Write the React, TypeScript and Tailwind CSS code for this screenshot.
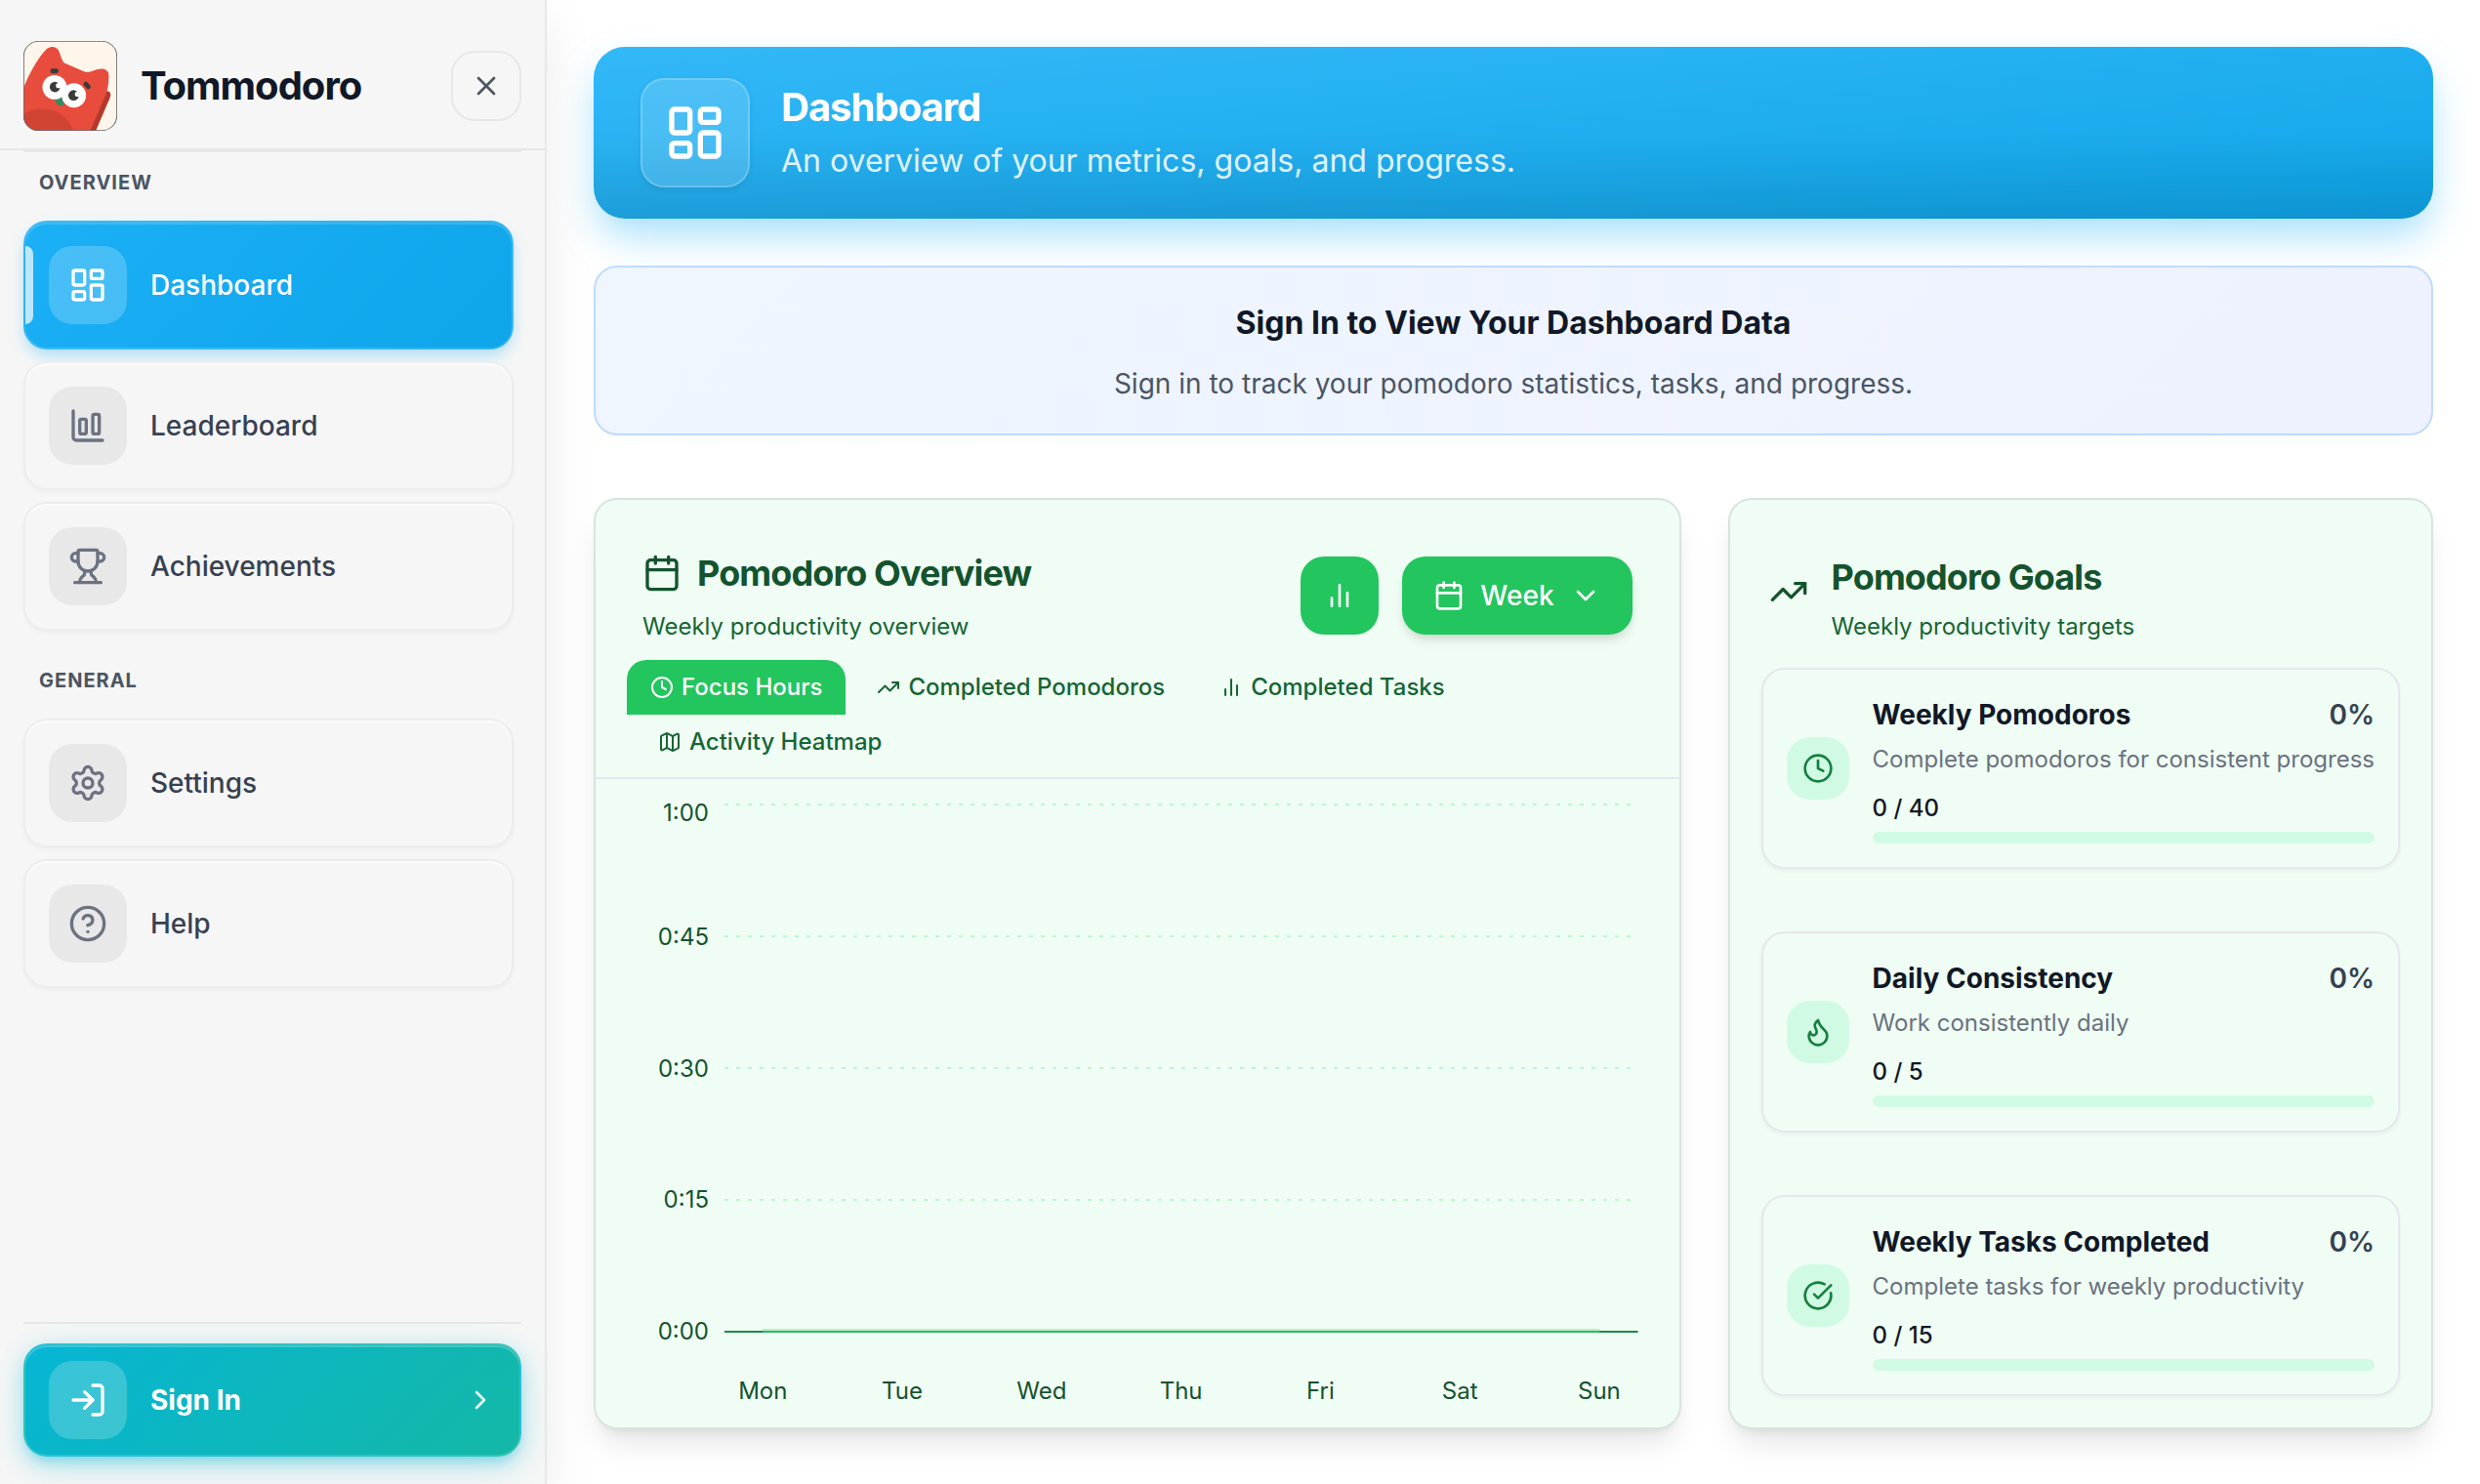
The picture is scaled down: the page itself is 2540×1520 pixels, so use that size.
import React from "react";
import {
  Calendar,
  ChevronDown,
  ChevronRight,
  CircleCheckBig,
  CircleHelp,
  Clock,
  Flame,
  LayoutDashboard,
  LogIn,
  Map as MapIcon,
  Settings,
  TrendingUp,
  Trophy,
  X,
} from "lucide-react";

type IconProps = { className?: string };
type IconType = React.ComponentType<IconProps>;

function ColumnsIcon({ className }: IconProps) {
  return (
    <svg
      className={className}
      viewBox="0 0 24 24"
      fill="none"
      stroke="currentColor"
      strokeWidth="2"
      strokeLinecap="round"
      strokeLinejoin="round"
      aria-hidden="true"
    >
      <path d="M18 20V10M12 20V4M6 20v-6" />
    </svg>
  );
}

function BoardIcon({ className }: IconProps) {
  return (
    <svg
      className={className}
      viewBox="0 0 24 24"
      fill="none"
      stroke="currentColor"
      strokeWidth="2"
      strokeLinecap="round"
      strokeLinejoin="round"
      aria-hidden="true"
    >
      <path d="M3 3v16a2 2 0 0 0 2 2h16" />
      <rect x="15" y="5" width="4" height="12" rx="1" />
      <rect x="7" y="8" width="4" height="9" rx="1" />
    </svg>
  );
}

function Logo() {
  return (
    <svg className="h-[92px] w-24 shrink-0" viewBox="43 37 286 274" preserveAspectRatio="none" role="img" aria-label="Tommodoro logo">
      <defs>
        <clipPath id="logo-frame">
          <rect x="43" y="37" width="286" height="274" rx="46" />
        </clipPath>
      </defs>
      <g clipPath="url(#logo-frame)">
        <rect x="43" y="37" width="286" height="274" fill="#fef5eb" />
        <path d="M290 196C296 184 310 190 309 202C308 210 300 226 296 236L263 313H240Z" fill="#b23a2c" />
        <path
          d="M40 188C58 142 84 92 112 63C126 50 146 54 152 70C157 82 160 97 168 104L228 130C238 134 250 130 258 127C276 119 302 118 303 140C304 162 301 184 294 201L246 313H40Z"
          fill="#e84c3d"
        />
        <circle cx="100" cy="345" r="102" fill="#d14434" />
        <path d="M139 212C140 228 150 237 166 233L160 205Z" fill="#2f8b62" />
        <circle cx="138" cy="178" r="37" fill="#fff" />
        <circle cx="197" cy="203" r="37" fill="#fff" />
        <circle cx="139" cy="177" r="16" fill="#3b3b3b" />
        <circle cx="150" cy="173" r="8" fill="#fff" />
        <circle cx="196" cy="203" r="16" fill="#3b3b3b" />
        <circle cx="208" cy="199" r="8" fill="#fff" />
        <rect x="125" y="121" width="25" height="14" rx="6" fill="#3b3b3b" />
        <rect x="225" y="165" width="25" height="14" rx="6" fill="#3b3b3b" transform="rotate(46 237 172)" />
      </g>
      <rect x="44" y="38" width="284" height="272" rx="45" fill="none" stroke="#6b6b6b" strokeWidth="3" />
    </svg>
  );
}

function NavItem({ icon: Icon, label, active = false }: { icon: IconType; label: string; active?: boolean }) {
  return (
    <li>
      <a
        href="#"
        aria-current={active ? "page" : undefined}
        className={
          active
            ? "relative flex items-center gap-6 overflow-hidden rounded-3xl border-2 border-white/15 bg-[linear-gradient(135deg,#1cb0f6,#0ea5e9)] p-6 text-white shadow-[0_8px_16px_-2px_rgba(28,176,246,0.35),inset_0_2px_0_rgba(255,255,255,0.15)]"
            : "relative flex items-center gap-6 rounded-3xl border-2 border-[#ededed] bg-[#f6f6f6] p-6 text-[#374151] shadow-[0_2px_4px_rgba(0,0,0,0.04),inset_0_2px_0_rgba(255,255,255,0.7)]"
        }
      >
        {active && <span className="absolute left-0 top-6 h-20 w-2 rounded-r-lg bg-white/70" />}
        <span
          className={
            active
              ? "flex size-20 items-center justify-center rounded-3xl bg-white/20"
              : "flex size-20 items-center justify-center rounded-3xl bg-[#e8e8e8] text-[#6b7280]"
          }
        >
          <Icon className="size-10" />
        </span>
        <span className="text-[28px] leading-10 font-medium">{label}</span>
      </a>
    </li>
  );
}

function NavSection({ title, children }: { title: string; children: React.ReactNode }) {
  return (
    <section>
      <h2 className="px-4 text-xl leading-[30px] font-bold tracking-wider text-[#4b5563]">{title}</h2>
      <ul className="mt-6 flex flex-col gap-3">{children}</ul>
    </section>
  );
}

function Sidebar() {
  return (
    <aside className="relative z-10 flex min-h-screen w-[560px] shrink-0 flex-col border-r-2 border-[#e7e7e7] bg-[#f6f6f6] shadow-[0_20px_50px_rgba(0,0,0,0.08)]">
      <div className="flex items-center border-b-2 border-[#e7e7e7] px-6 pt-10 pb-4">
        <div className="flex h-24 flex-1 items-center gap-6">
          <Logo />
          <span className="text-[40px] leading-[48px] font-bold tracking-tight text-[#111827]">Tommodoro</span>
        </div>
        <button
          type="button"
          aria-label="Close sidebar"
          className="flex size-[72px] items-center justify-center rounded-3xl border-2 border-[#e7e7e7] text-[#4b5563]"
        >
          <X className="size-8" />
        </button>
      </div>
      <nav className="mx-6 flex flex-1 flex-col gap-9 border-t-2 border-[#e7e7e7] pt-4 pr-2">
        <NavSection title="OVERVIEW">
          <NavItem icon={LayoutDashboard} label="Dashboard" active />
          <NavItem icon={BoardIcon} label="Leaderboard" />
          <NavItem icon={Trophy} label="Achievements" />
        </NavSection>
        <NavSection title="GENERAL">
          <NavItem icon={Settings} label="Settings" />
          <NavItem icon={CircleHelp} label="Help" />
        </NavSection>
      </nav>
      <div className="mx-6 border-t-2 border-[#e7e7e7] pt-5 pb-7">
        <button
          type="button"
          className="flex w-full items-center gap-6 rounded-3xl border-2 border-white/15 bg-[linear-gradient(135deg,#06b6d4,#14b8a6)] px-6 py-4 text-left text-white shadow-[0_8px_30px_rgba(6,182,212,0.35),0_8px_12px_-4px_rgba(6,182,212,0.3),inset_0_2px_0_rgba(255,255,255,0.2)]"
        >
          <span className="flex size-20 items-center justify-center rounded-3xl bg-white/20">
            <LogIn className="size-10" />
          </span>
          <span className="flex-1 text-[28px] leading-10 font-bold">Sign In</span>
          <ChevronRight className="size-8 opacity-90" />
        </button>
      </div>
    </aside>
  );
}

function PageBanner() {
  return (
    <header className="flex items-center gap-8 rounded-[32px] bg-[linear-gradient(to_top,rgba(0,0,0,0.1),transparent_50%),linear-gradient(to_bottom_right,rgba(255,255,255,0.1),transparent),linear-gradient(to_bottom_right,#1cb0f6,#0ea5e9)] px-12 py-8 shadow-[0_20px_40px_-4px_rgba(28,176,246,0.4)]">
      <div className="flex size-28 items-center justify-center rounded-3xl border-2 border-white/20 bg-white/15 text-white shadow-[0_2px_6px_rgba(0,0,0,0.08)]">
        <LayoutDashboard className="size-16" />
      </div>
      <div>
        <h1 className="text-[40px] leading-[58px] font-bold tracking-tight text-white">Dashboard</h1>
        <p className="text-[32px] leading-[52px] text-white/85">An overview of your metrics, goals, and progress.</p>
      </div>
    </header>
  );
}

function SignInNotice() {
  return (
    <section className="relative mt-12 rounded-3xl border-2 border-[#bfdbfe] bg-[linear-gradient(135deg,#eff6ff,#eef2ff)] px-8 pt-8 pb-[30px] text-center">
      <h2 className="text-[32px] leading-[50px] font-bold text-[#111827]">Sign In to View Your Dashboard Data</h2>
      <p className="mt-4 text-[28px] leading-[42px] text-[#4b5563]">
        Sign in to track your pomodoro statistics, tasks, and progress.
      </p>
    </section>
  );
}

const tabs: { label: string; icon: IconType }[] = [
  { label: "Focus Hours", icon: Clock },
  { label: "Completed Pomodoros", icon: TrendingUp },
  { label: "Completed Tasks", icon: ColumnsIcon },
  { label: "Activity Heatmap", icon: MapIcon },
];

const hourTicks = [
  { label: "1:00", line: 26, baseline: 43 },
  { label: "0:45", line: 161, baseline: 170 },
  { label: "0:30", line: 296, baseline: 305 },
  { label: "0:15", line: 431, baseline: 439 },
  { label: "0:00", line: 566, baseline: 574 },
];

const days = ["Mon", "Tue", "Wed", "Thu", "Fri", "Sat", "Sun"];

function FocusChart() {
  return (
    <div className="flex gap-4 pr-[42px]">
      <svg className="h-[663px] w-[116px] shrink-0" aria-hidden="true">
        {hourTicks.map((tick) => (
          <text key={tick.label} x="116" y={tick.baseline} textAnchor="end" className="fill-[#14532d] text-2xl">
            {tick.label}
          </text>
        ))}
      </svg>
      <svg className="h-[663px] w-0 flex-1 overflow-visible" role="img" aria-label="Focus hours per day">
        {hourTicks.slice(0, 4).map((tick) => (
          <line
            key={tick.label}
            x1="0"
            x2="100%"
            y1={tick.line}
            y2={tick.line}
            stroke="#bbf7d0"
            strokeWidth="2"
            strokeDasharray="4 8"
          />
        ))}
        <line x1="0" x2="100%" y1="566" y2="566" stroke="#1b8a47" strokeWidth="2" />
        <line x1="4.2%" x2="95.8%" y1="566" y2="566" stroke="#27bd5e" strokeWidth="2" />
        <line x1="4.2%" x2="95.8%" y1="564" y2="564" stroke="#22c55e" strokeOpacity="0.25" strokeWidth="2" />
        {days.map((day, i) => (
          <text key={day} x={`${4.2 + i * 15.26}%`} y="635" textAnchor="middle" className="fill-[#14532d] text-2xl">
            {day}
          </text>
        ))}
      </svg>
    </div>
  );
}

function OverviewCard() {
  return (
    <section className="rounded-3xl border-2 border-[#d8e4dc] bg-[#f0fdf4] shadow-[0_20px_30px_-6px_rgba(0,0,0,0.1),0_8px_12px_-8px_rgba(0,0,0,0.1)]">
      <div className="flex items-center px-12 pt-12">
        <div className="flex-1">
          <h2 className="flex items-center gap-4 text-4xl leading-[54px] font-bold tracking-tight text-[#14532d]">
            <Calendar className="size-10" />
            Pomodoro Overview
          </h2>
          <p className="mt-2.5 text-2xl leading-9 text-[#166534]">Weekly productivity overview</p>
        </div>
        <div className="flex gap-6">
          <button
            type="button"
            aria-label="Chart type"
            className="flex size-20 items-center justify-center rounded-3xl bg-[#22c55e] text-white"
          >
            <ColumnsIcon className="size-8" />
          </button>
          <button
            type="button"
            className="flex h-20 items-center gap-4 rounded-3xl bg-[#22c55e] px-8 text-[28px] font-medium text-white shadow-[0_8px_12px_-2px_rgba(0,0,0,0.1),0_4px_8px_-4px_rgba(0,0,0,0.1)]"
          >
            <Calendar className="size-8" />
            Week
            <ChevronDown className="size-8" />
          </button>
        </div>
      </div>
      <div role="tablist" className="mt-4 flex flex-wrap border-b-2 border-[#e2e8f0] px-8 pb-2">
        {tabs.map(({ label, icon: Icon }, i) => (
          <button
            key={label}
            type="button"
            role="tab"
            aria-selected={i === 0}
            className={
              i === 0
                ? "flex h-14 items-center gap-2 rounded-t-[20px] bg-[#22c55e] px-6 text-2xl font-medium text-white"
                : "ml-2 flex h-14 items-center gap-2 px-6 text-2xl font-medium text-[#166534]"
            }
          >
            <Icon className="size-6" />
            {label}
          </button>
        ))}
      </div>
      <FocusChart />
    </section>
  );
}

function Goal({ icon: Icon, title, text, target }: { icon: IconType; title: string; text: string; target: number }) {
  return (
    <li className="flex items-center gap-6 rounded-3xl border-2 border-[#e5e7eb] p-6 shadow-[0_2px_4px_rgba(0,0,0,0.05)]">
      <span className="flex size-16 shrink-0 items-center justify-center rounded-3xl bg-[#d1fae5] text-[#15803d]">
        <Icon className="size-8" />
      </span>
      <div className="flex-1">
        <div className="flex justify-between text-[28px] leading-[44px]">
          <h3 className="font-bold text-[#111827]">{title}</h3>
          <span className="font-semibold text-[#374151]">0%</span>
        </div>
        <p className="mt-1.5 text-2xl leading-9 whitespace-nowrap text-[#6b7280]">{text}</p>
        <p className="mt-3.5 text-2xl leading-9 font-medium text-[#111827]">0 / {target}</p>
        <div
          role="progressbar"
          aria-label={title}
          aria-valuenow={0}
          aria-valuemin={0}
          aria-valuemax={target}
          className="mt-1.5 h-3 rounded-md bg-[#d1fae5]"
        />
      </div>
    </li>
  );
}

function GoalsCard() {
  return (
    <section className="rounded-3xl border-2 border-[#d8e4dc] bg-[#f0fdf4] px-8 pt-10 pb-8 shadow-[0_20px_30px_-6px_rgba(0,0,0,0.1),0_8px_12px_-8px_rgba(0,0,0,0.1)]">
      <div className="flex items-center gap-6 px-2">
        <TrendingUp className="size-10 text-[#14532d]" />
        <div className="pt-3">
          <h2 className="text-4xl leading-[54px] font-bold tracking-tight text-[#14532d]">Pomodoro Goals</h2>
          <p className="mt-1.5 text-2xl leading-9 text-[#166534]">Weekly productivity targets</p>
        </div>
      </div>
      <ul className="mt-6 flex flex-col gap-16">
        <Goal icon={Clock} title="Weekly Pomodoros" text="Complete pomodoros for consistent progress" target={40} />
        <Goal icon={Flame} title="Daily Consistency" text="Work consistently daily" target={5} />
        <Goal icon={CircleCheckBig} title="Weekly Tasks Completed" text="Complete tasks for weekly productivity" target={15} />
      </ul>
    </section>
  );
}

export default function App() {
  return (
    <div className="flex min-h-screen bg-white font-['Inter',sans-serif]">
      <Sidebar />
      <main className="min-w-0 flex-1 px-12 pt-12">
        <PageBanner />
        <SignInNotice />
        <div className="mt-16 grid grid-cols-[1114fr_722fr] gap-12">
          <OverviewCard />
          <GoalsCard />
        </div>
      </main>
    </div>
  );
}
